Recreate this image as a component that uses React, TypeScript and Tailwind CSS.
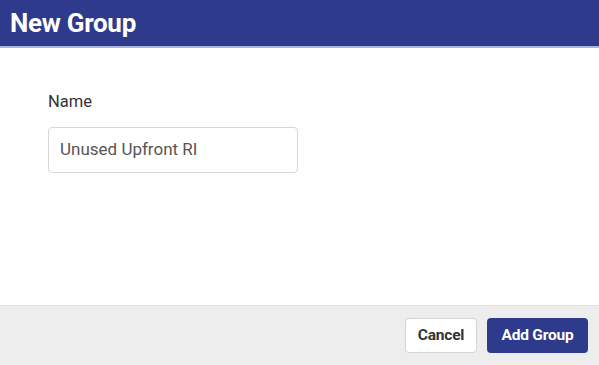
export default function App() {
  return (
    <div className="w-[599px] h-[365px] flex flex-col bg-white font-['Roboto',sans-serif] overflow-hidden">
      <div className="h-[48px] shrink-0 bg-[#2e3a8b] border-b-2 border-[#a9b3e3] flex items-center pl-[10px]">
        <h1 className="text-[26px] font-bold text-white leading-none tracking-[-0.3px] pb-[1px]">New Group</h1>
      </div>

      <div className="flex-1 pl-[48px] pt-[46px]">
        <label className="block text-[16.5px] text-[#333] leading-none mb-[16px]">Name</label>
        <div className="w-[250px] h-[46px] border border-[#d6d6d6] rounded-[4px] flex items-center pl-[11px] text-[17px] text-[#555]">
          Unused Upfront RI
        </div>
      </div>

      <div className="h-[60px] shrink-0 bg-[#ededed] border-t border-[#e2e2e2] flex items-center justify-end gap-[10px] pr-[11px]">
        <button className="w-[72px] h-[35px] bg-white border border-[#d4d4d4] rounded-[4px] text-[15.5px] font-bold text-[#333] tracking-[-0.2px]">
          Cancel
        </button>
        <button className="w-[101px] h-[35px] bg-[#2e3a8b] rounded-[4px] text-[15.5px] font-bold text-white tracking-[-0.2px]">
          Add Group
        </button>
      </div>
    </div>
  );
}
